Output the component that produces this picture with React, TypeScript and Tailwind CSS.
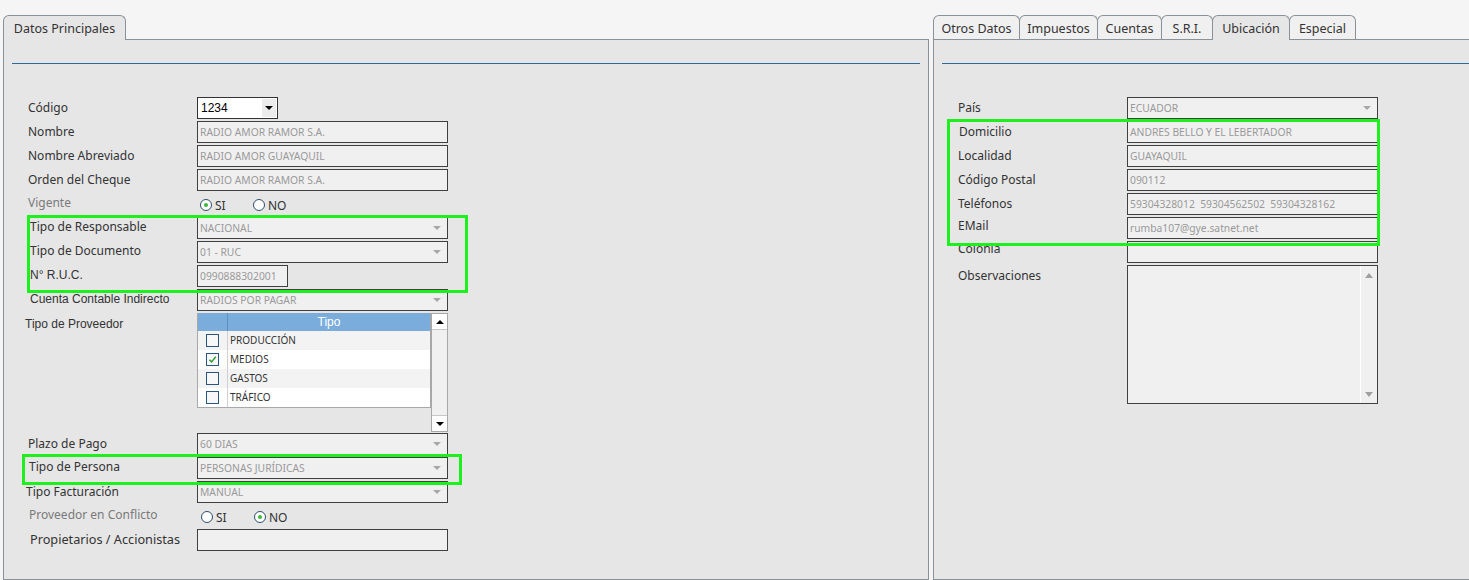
import React from 'react';

const LABEL = "font-['Noto_Sans',sans-serif] text-[12px] text-[#333] whitespace-nowrap";
const LABEL_GRAY = "font-['Noto_Sans',sans-serif] text-[12px] text-[#7a7a7a] whitespace-nowrap";
const LABEL_ARIAL = "font-['Liberation_Sans',Arial,sans-serif] text-[12px] text-[#333] whitespace-nowrap";

const Field: React.FC<{ value?: string; w?: string; select?: boolean }> = ({ value = '', w = 'w-[251px]', select }) => (
    <div className={`${w} h-[22px] shrink-0 border border-[#404040] bg-[#f0f0f0] flex items-center pl-[2px] font-['Noto_Sans',sans-serif] text-[10.3px] text-[#9a9a9a] leading-none`}>
        <span className="whitespace-pre">{value}</span>
        {select && <span className="ml-auto mr-[6px] border-x-[4px] border-t-[4px] border-x-transparent border-t-[#a8a8a8]" />}
    </div>
);

interface RowProps {
    label: string;
    labelClass?: string;
    indent?: string;
    h?: string;
    children?: React.ReactNode;
}

const Row: React.FC<RowProps> = ({ label, labelClass = LABEL, indent = '', h = 'h-[24px]', children }) => (
    <div className={`flex ${h}`}>
        <div className="w-[169px] shrink-0">
            <div className={`h-[22px] flex items-center ${indent} ${labelClass}`}>{label}</div>
        </div>
        {children}
    </div>
);

const Radio: React.FC<{ checked?: boolean; label: string }> = ({ checked, label }) => (
    <div className="w-[53px] flex items-center gap-[3px]">
        <span className="w-[12px] h-[12px] rounded-full border border-[#2f4d6b] bg-white flex items-center justify-center">
            {checked && <span className="w-[4px] h-[4px] rounded-full bg-[#3cb83c]" />}
        </span>
        <span className="font-['Noto_Sans',sans-serif] text-[12px] text-[#333] mt-[2px]">{label}</span>
    </div>
);

const Tab: React.FC<{ label: string; active?: boolean; first?: boolean; w: string }> = ({ label, active, first, w }) => (
    <div
        className={`${w} h-[24px] flex items-center justify-center pt-[3px] border border-b-0 border-[#8a9299] rounded-t-[6px] font-['Noto_Sans',sans-serif] text-[12.5px] text-[#333] ${
            first ? '' : '-ml-px'
        } ${active ? 'bg-[#e6e6e6] h-[25px] -mb-px relative z-10' : 'bg-[#f0f0f0]'}`}
    >
        {label}
    </div>
);

const tipos = [
    { name: 'PRODUCCIÓN', checked: false },
    { name: 'MEDIOS', checked: true },
    { name: 'GASTOS', checked: false },
    { name: 'TRÁFICO', checked: false },
];

const TipoTable = () => (
    <div className="flex h-[120px]">
        <div className="w-[234px] h-[95px] border-x border-b border-[#a8a8a8] bg-white flex flex-col">
            <div className="h-[18px] flex bg-[#7aaddc]">
                <div className="w-[30px] border-r border-[#5d8fc0]" />
                <div className="flex-1 flex items-center justify-center font-['Liberation_Sans',Arial,sans-serif] text-[12px] text-white">Tipo</div>
            </div>
            {tipos.map((t, i) => (
                <div key={t.name} className={`h-[19px] flex ${i % 2 === 0 ? 'bg-[#f3f3f3]' : 'bg-white'}`}>
                    <div className="w-[30px] border-r border-[#d0d0d0] flex items-center justify-center">
                        <span className="w-[13px] h-[13px] border border-[#2a5580] bg-[#f7f7f7] flex items-center justify-center">
                            {t.checked && (
                                <svg viewBox="0 0 10 10" className="w-[9px] h-[9px]">
                                    <path d="M1.5 5.2 L4 7.6 L8.6 2" fill="none" stroke="#2e9e2e" strokeWidth="1.6" />
                                </svg>
                            )}
                        </span>
                    </div>
                    <div className="flex-1 flex items-center pl-[2px] font-['Noto_Sans',sans-serif] text-[10px] text-[#333]">{t.name}</div>
                </div>
            ))}
        </div>
        <div className="w-[17px] h-[119px] border border-[#a8a8a8] bg-[#f0f0f0] flex flex-col justify-between">
            <div className="h-[16px] bg-white border-b border-[#c8c8c8] flex items-center justify-center">
                <span className="border-x-[4px] border-b-[4px] border-x-transparent border-b-black" />
            </div>
            <div className="h-[16px] bg-white border-t border-[#c8c8c8] flex items-center justify-center">
                <span className="border-x-[4px] border-t-[4px] border-x-transparent border-t-black" />
            </div>
        </div>
    </div>
);

const LeftPanel = () => (
    <div className="w-[926px] shrink-0 flex flex-col">
        <div className="flex">
            <Tab label="Datos Principales" active first w="w-[123px]" />
        </div>
        <div className="flex-1 border border-[#8a9299] bg-[#e6e6e6]">
            <div className="mt-[23px] ml-[8px] mr-[8px] h-px bg-[#2f6a9a]" />
            <div className="mt-[33px] pl-[24px]">
                <Row label="Código">
                    <div className="w-[81px] h-[22px] border border-[#333] bg-white flex items-center">
                        <span className="pl-[3px] font-['Liberation_Sans',Arial,sans-serif] text-[12px] text-black">1234</span>
                        <span className="ml-auto mr-[1px] w-[14px] h-[18px] bg-[#ececec] flex items-center justify-center">
                            <span className="border-x-[4px] border-t-[4px] border-x-transparent border-t-black" />
                        </span>
                    </div>
                </Row>
                <Row label="Nombre">
                    <Field value="RADIO AMOR RAMOR S.A." />
                </Row>
                <Row label="Nombre Abreviado">
                    <Field value="RADIO AMOR GUAYAQUIL" />
                </Row>
                <Row label="Orden del Cheque">
                    <Field value="RADIO AMOR RAMOR S.A." />
                </Row>
                <Row label="Vigente" labelClass={LABEL_GRAY} indent="-mt-[1px]">
                    <div className="h-[22px] flex items-center pl-[3px] mt-[1px]">
                        <Radio checked label="SI" />
                        <Radio label="NO" />
                    </div>
                </Row>
                <Row label="Tipo de Responsable" indent="pl-[2px] -mt-[1px]">
                    <Field value="NACIONAL" select />
                </Row>
                <Row label="Tipo de Documento" indent="pl-[2px] -mt-[1px]">
                    <Field value="01 - RUC" select />
                </Row>
                <Row label="N° R.U.C." labelClass={LABEL_ARIAL} indent="pl-[2px] -mt-[1px]">
                    <Field value="0990888302001" w="w-[91px]" />
                </Row>
                <Row label="Cuenta Contable Indirecto" labelClass={LABEL_ARIAL} indent="pl-[2px] -mt-[1px]">
                    <Field value="RADIOS POR PAGAR" select />
                </Row>
                <Row label="Tipo de Proveedor" labelClass={LABEL_ARIAL} indent="-ml-[3px]" h="h-[120px]">
                    <TipoTable />
                </Row>
                <Row label="Plazo de Pago">
                    <Field value="60 DIAS" select />
                </Row>
                <Row label="Tipo de Persona" indent="pl-[1px] -mt-[1px]">
                    <Field value="PERSONAS JURÍDICAS" select />
                </Row>
                <Row label="Tipo Facturación" indent="-ml-[2px]">
                    <Field value="MANUAL" select />
                </Row>
                <Row label="Proveedor en Conflicto" labelClass={LABEL_GRAY} indent="pl-[1px] -mt-[1px]">
                    <div className="h-[22px] flex items-center pl-[4px] mt-[1px]">
                        <Radio label="SI" />
                        <Radio checked label="NO" />
                    </div>
                </Row>
                <Row
                    label="Propietarios / Accionistas"
                    labelClass="font-['Noto_Sans',sans-serif] text-[12.7px] text-[#333] whitespace-nowrap"
                    indent="pl-[2px]"
                >
                    <Field />
                </Row>
            </div>
        </div>
    </div>
);

const RightPanel = () => (
    <div className="w-[540px] shrink-0 flex flex-col">
        <div className="flex">
            <Tab label="Otros Datos" first w="w-[87px]" />
            <Tab label="Impuestos" w="w-[79px]" />
            <Tab label="Cuentas" w="w-[65px]" />
            <Tab label="S.R.I." w="w-[52px]" />
            <Tab label="Ubicación" active w="w-[78px]" />
            <Tab label="Especial" w="w-[67px]" />
        </div>
        <div className="flex-1 border border-[#8a9299] bg-[#e6e6e6]">
            <div className="mt-[23px] ml-[8px] h-px bg-[#2f6a9a]" />
            <div className="mt-[33px] pl-[24px]">
                <Row label="País">
                    <Field value="ECUADOR" select />
                </Row>
                <Row label="Domicilio" indent="pl-[1px]">
                    <Field value="ANDRES BELLO Y EL LEBERTADOR" />
                </Row>
                <Row label="Localidad">
                    <Field value="GUAYAQUIL" />
                </Row>
                <Row label="Código Postal">
                    <Field value="090112" />
                </Row>
                <Row label="Teléfonos">
                    <Field value="59304328012  59304562502  59304328162" />
                </Row>
                <Row label="EMail" indent="-mt-[2px]">
                    <Field value="rumba107@gye.satnet.net" />
                </Row>
                <Row label="Colonia" indent="-mt-[3px]">
                    <Field />
                </Row>
                <Row label="Observaciones" h="h-[139px]">
                    <div className="w-[251px] h-[139px] border border-[#404040] bg-[#f0f0f0] flex justify-end">
                        <div className="w-[17px] border-l border-white flex flex-col items-center justify-between pt-[7px] pb-[6px]">
                            <span className="border-x-[4px] border-b-[5px] border-x-transparent border-b-[#a0a0a0]" />
                            <span className="border-x-[4px] border-t-[5px] border-x-transparent border-t-[#a0a0a0]" />
                        </div>
                    </div>
                </Row>
            </div>
        </div>
    </div>
);

export default function App() {
    return (
        <div className="relative w-[1469px] h-[580px] overflow-hidden bg-[#f5f5f5] pt-[15px] pl-[3px] flex gap-[4px]">
            <LeftPanel />
            <RightPanel />
            <div className="absolute left-[27px] top-[215px] w-[441px] h-[78px] border-[3px] border-[#1ef01e]" />
            <div className="absolute left-[22px] top-[454px] w-[440px] h-[31px] border-[3px] border-[#1ef01e]" />
            <div className="absolute left-[947px] top-[119px] w-[433px] h-[127px] border-[3px] border-[#1ef01e]" />
        </div>
    );
}
